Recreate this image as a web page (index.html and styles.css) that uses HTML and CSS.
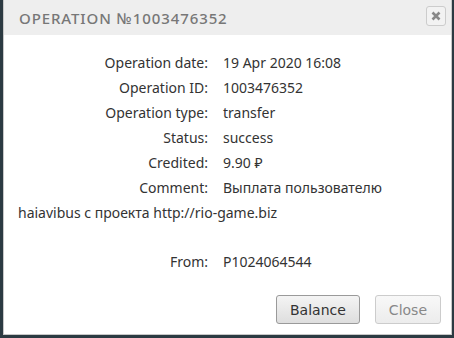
FILE: index.html
```html
<!DOCTYPE html>
<html lang="en">
<head>
  <meta charset="UTF-8"/>
  <title>Operation</title>
  <link rel="stylesheet" href="styles.css">
</head>
<body>
  <div class="dialog">
    <div class="header">
      <span class="title">Operation №1003476352</span>
      <button class="x" title="close">
        <svg width="10" height="10" viewBox="0 0 10 10"><path d="M1.5 1.5L8.5 8.5M8.5 1.5L1.5 8.5" stroke="#888" stroke-width="2.6"/></svg>
      </button>
    </div>
    <div class="content">
      <p><span class="label">Operation date:</span>19 Apr 2020 16:08</p>
      <p><span class="label">Operation ID:</span>1003476352</p>
      <p><span class="label">Operation type:</span>transfer</p>
      <p><span class="label">Status:</span>success</p>
      <p><span class="label">Credited:</span>9.90 ₽</p>
      <p><span class="label">Comment:</span>Выплата пользователю haiavibus с проекта http://rio-game.biz</p>
      <p class="gap"><span class="label">From:</span>P1024064544</p>
    </div>
    <div class="footer">
      <button class="btn">Balance</button>
      <button class="btn off">Close</button>
    </div>
  </div>
</body>
</html>
```
FILE: styles.css
```css
body { margin: 0; background: #2c3a42; font-family: "Noto Sans", sans-serif; }
.dialog {
  margin-left: 3px; width: 447px; height: 334px;
  background: #fff; border: 1px solid #c8c8c8; border-top: 0;
  display: flex; flex-direction: column;
}
.header {
  background: #eee; height: 35px; display: flex; align-items: center;
  justify-content: space-between; padding: 0 5px 0 15px;
}
.title {
  text-transform: uppercase; color: #777; font-weight: 500;
  font-size: 15px; letter-spacing: 0.9px;
}
.x {
  width: 20px; height: 20px; padding: 0; border: 1px solid #ccc; border-radius: 3px;
  background: #f2f2f2; display: flex; align-items: center; justify-content: center;
  margin-top: -4px;
}
.content { padding: 15px 18px 0 14px; color: #333; font-size: 14px; line-height: 25px; }
.content p { margin: 0; }
.content .gap { margin-top: 24px; }
.label { display: inline-block; width: 190px; text-align: right; margin-right: 15px; }
.footer { margin-top: auto; display: flex; justify-content: flex-end; gap: 15px; padding: 0 10px 10px 0; }
.btn {
  font-family: "DejaVu Sans", Verdana, sans-serif; font-size: 14px; color: #333;
  height: 29px; padding: 0 13px; border: 1px solid #9a9a9a; border-radius: 3px;
  background: linear-gradient(#f4f4f4, #dedede);
}
.btn.off { color: #888; border-color: #ccc; background: linear-gradient(#f8f8f8, #ececec); }
```
